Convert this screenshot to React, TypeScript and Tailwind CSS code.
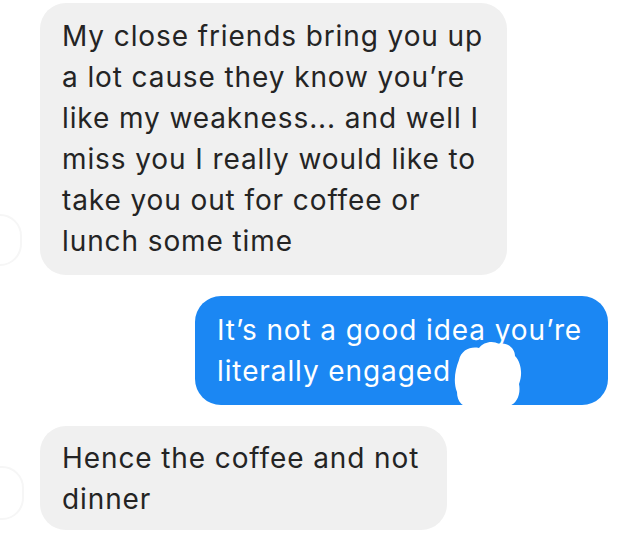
import React from "react";

// 말풍선 한 줄씩 그대로 유지
const Bubble = ({
  lines,
  mine,
  className = "",
}: {
  lines: string[];
  mine?: boolean;
  className?: string;
}) => {
  return (
    <div
      className={`relative rounded-[26px] pl-[22px] pr-[16px] text-[28px] leading-[41px] tracking-[0.9px] ${
        mine ? "bg-[#1b87f3] text-white" : "bg-[#f0f0f0] text-[#242424]"
      } ${className}`}
    >
      {lines.map((l, i) => (
        <div key={i} className="whitespace-nowrap">
          {l}
        </div>
      ))}
    </div>
  );
};

export default function App() {
  return (
    <div
      className="relative w-[640px] h-[534px] overflow-hidden bg-white"
      style={{ fontFamily: "Inter, 'Liberation Sans', sans-serif" }}
    >
      {/* 흐릿한 프로필 자국 */}
      <div className="absolute left-[-22px] top-[214px] h-[52px] w-[44px] rounded-full border-2 border-[#f6f6f6]" />
      <div className="absolute left-[-20px] top-[466px] h-[54px] w-[44px] rounded-full border-2 border-[#f6f6f6]" />

      <div className="flex flex-col gap-[21px] pt-[3px]">
        <div className="pl-[40px]">
          <Bubble
            className="w-[467px] py-[13px]"
            lines={[
              "My close friends bring you up",
              "a lot cause they know you’re",
              "like my weakness... and well I",
              "miss you I really would like to",
              "take you out for coffee or",
              "lunch some time",
            ]}
          />
        </div>

        <div className="flex justify-end pr-[32px]">
          <div className="relative">
            <Bubble
              mine
              className="w-[413px] pt-[14px] pb-[13px]"
              lines={["It’s not a good idea you’re", "literally engaged"]}
            />
            {/* 가려진 이모지 */}
            <svg
              className="absolute left-[258px] top-[44px]"
              width="72"
              height="70"
              viewBox="0 0 72 70"
            >
              <path
                d="M6 20 C8 10 18 6 26 8 C30 2 40 0 46 4 C54 2 62 8 62 16 C68 22 70 34 66 44 C68 54 64 64 56 66 C46 70 30 68 20 68 C10 68 4 62 4 52 C0 42 2 30 6 20 Z"
                fill="#ffffff"
              />
            </svg>
          </div>
        </div>

        <div className="pl-[40px]">
          <Bubble
            className="w-[407px] pt-[12px] pb-[10px]"
            lines={["Hence the coffee and not", "dinner"]}
          />
        </div>
      </div>
    </div>
  );
}
